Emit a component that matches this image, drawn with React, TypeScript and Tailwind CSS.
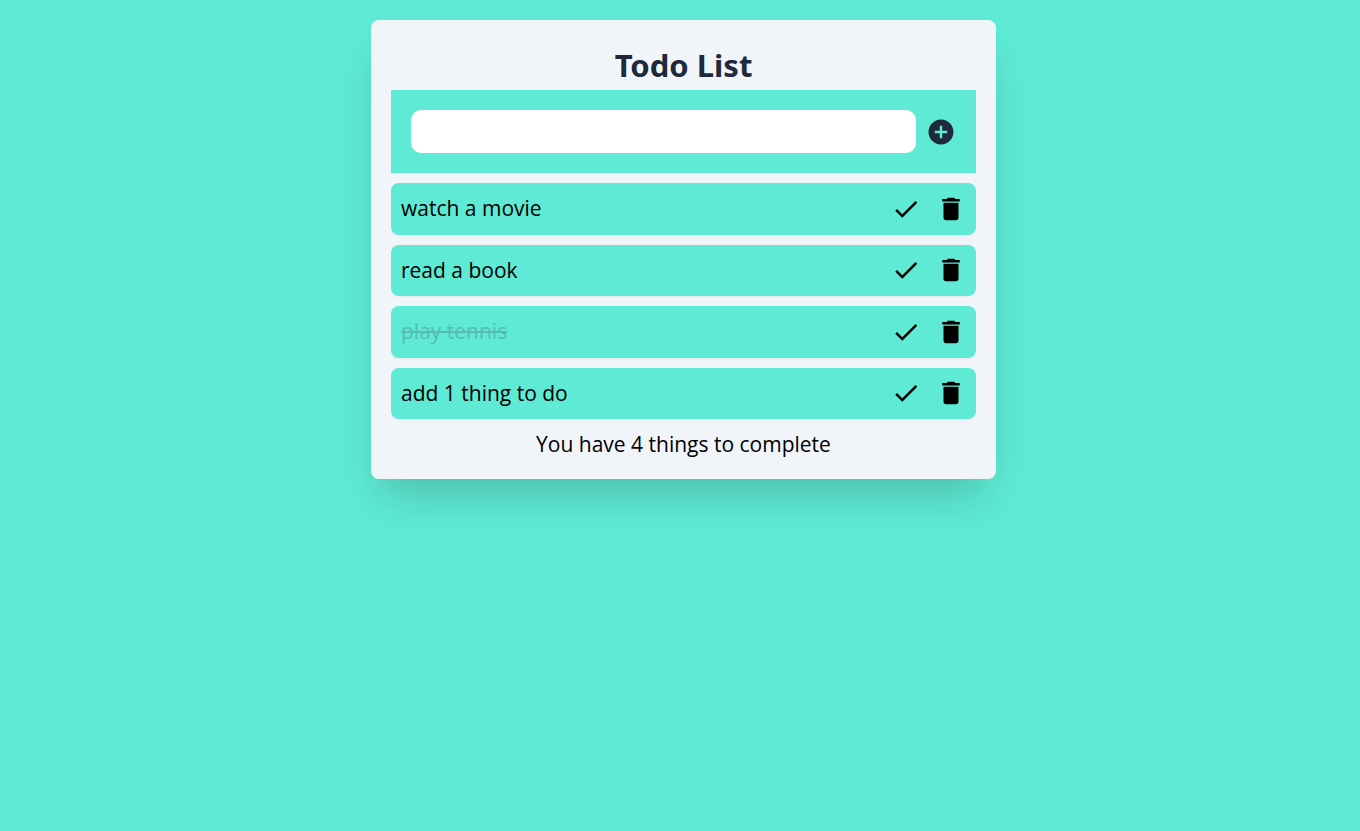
import { useState, type FormEvent } from "react";
import { MdAddCircle, MdCheck, MdDelete } from "react-icons/md";

type Todo = { id: number; title: string; done: boolean };

const initialTodos: Todo[] = [
  { id: 1, title: "watch a movie", done: false },
  { id: 2, title: "read a book", done: false },
  { id: 3, title: "play tennis", done: true },
  { id: 4, title: "add 1 thing to do", done: false },
];

type TodoItemProps = { todo: Todo; onToggle: () => void; onDelete: () => void };

function TodoItem({ todo, onToggle, onDelete }: TodoItemProps) {
  return (
    <li className="flex items-center justify-between rounded-lg bg-[#5eead4] p-[10px] shadow-[0_1px_2px_rgba(0,0,0,0.05)]">
      <span className={todo.done ? "leading-normal text-gray-600 line-through opacity-30" : "leading-normal"}>
        {todo.title}
      </span>
      <div className="flex gap-[15px]">
        <button type="button" aria-label={`Complete ${todo.title}`} onClick={onToggle}>
          <MdCheck size={30} />
        </button>
        <button type="button" aria-label={`Delete ${todo.title}`} onClick={onDelete}>
          <MdDelete size={30} />
        </button>
      </div>
    </li>
  );
}

export default function App() {
  const [todos, setTodos] = useState(initialTodos);
  const [title, setTitle] = useState("");

  const addTodo = (event: FormEvent) => {
    event.preventDefault();
    if (!title.trim()) return;
    setTodos([...todos, { id: Date.now(), title, done: false }]);
    setTitle("");
  };

  return (
    <div className="min-h-screen bg-[#5eead4] py-5 pl-[7px] font-['Open_Sans','Noto_Sans',sans-serif] text-[21px] text-black">
      <main className="mx-auto max-w-[625px] rounded-lg bg-[#f1f5f9] p-5 shadow-[0_25px_42px_-12px_rgba(0,0,0,0.2)]">
        <h1 className="pt-[5px] pb-[5px] text-center font-['Noto_Sans','Open_Sans',sans-serif] text-[31px] leading-10 font-bold text-[#1e293b]">
          Todo List
        </h1>
        <form onSubmit={addTodo} className="flex items-center gap-[10px] bg-[#5eead4] p-5">
          <input
            type="text"
            aria-label="New todo"
            value={title}
            onChange={(event) => setTitle(event.target.value)}
            className="h-[43px] min-w-0 flex-1 rounded-[10px] bg-white px-[10px] outline-none"
          />
          <button type="submit" aria-label="Add todo" className="text-[#1e293b]">
            <MdAddCircle size={30} />
          </button>
        </form>
        <ul className="mt-[10px] flex flex-col gap-[10px]">
          {todos.map((todo) => (
            <TodoItem
              key={todo.id}
              todo={todo}
              onToggle={() => setTodos(todos.map((t) => (t.id === todo.id ? { ...t, done: !t.done } : t)))}
              onDelete={() => setTodos(todos.filter((t) => t.id !== todo.id))}
            />
          ))}
        </ul>
        <p className="mt-[10px] text-center leading-[30px]">You have {todos.length} things to complete</p>
      </main>
    </div>
  );
}
